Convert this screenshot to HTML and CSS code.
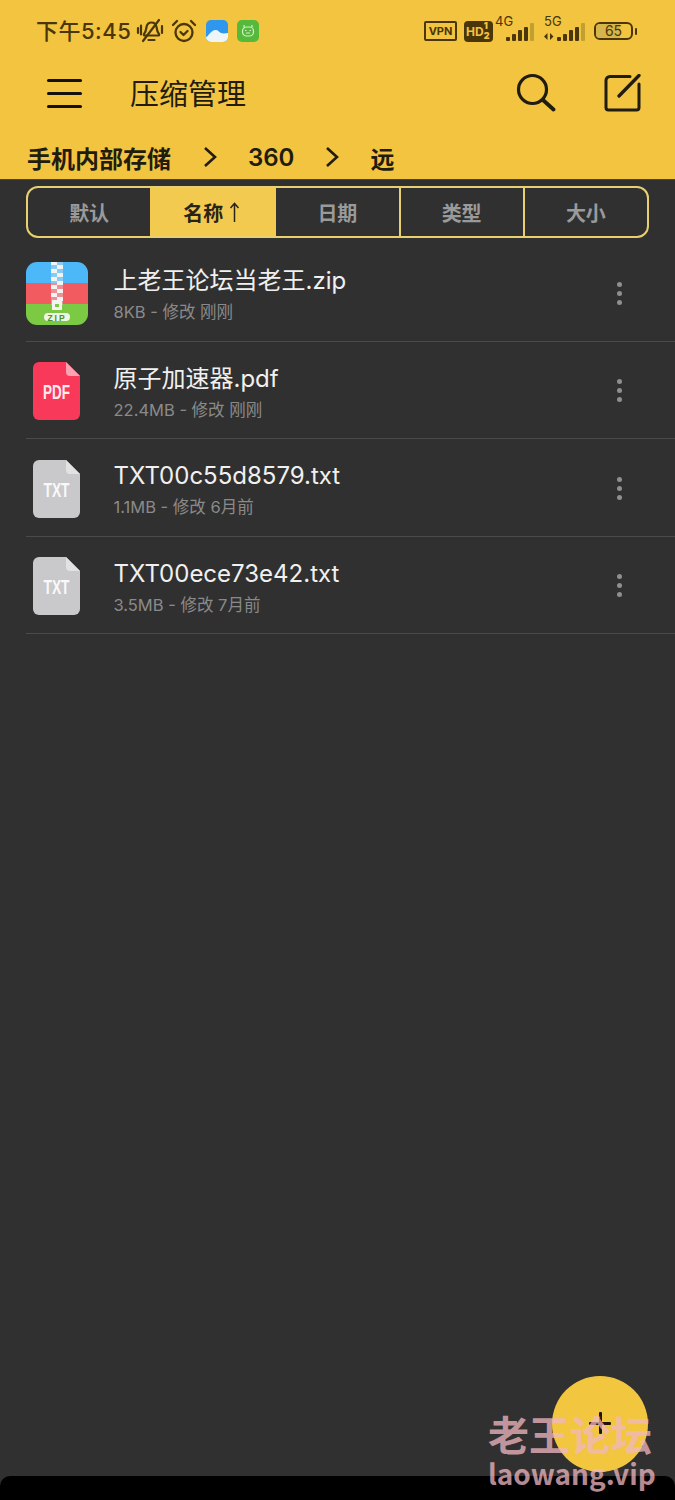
FILE: index.html
```html
<!DOCTYPE html>
<html lang="zh-CN">

<head>
    <meta charset="UTF-8">
    <meta name="viewport" content="width=device-width, initial-scale=1.0">
    <title>压缩管理</title>
    <link rel="stylesheet" href="styles.css">
</head>

<body>
    <div class="main">
        <div class="header">
            <div class="status">
                <div class="status-left">
                    <span class="time">下午5:45</span>
                    <svg class="ico-bell" width="30" height="28" viewBox="0 0 30 28" fill="none" stroke="#4a3608" stroke-width="2.2" stroke-linecap="round">
                        <path d="M8 17c2-2 2-4 2.500-7 .6-3 3-4.500 5-4.500 2.500 0 4.500 1.600 5 4.500.4 3 .8 5 2.500 7 .6.900 0 1.500-1 1.500H9c-1 0-1.500-.7-1-1.500z"/>
                        <path d="M12.500 23h6"/>
                        <path d="M7 24L23 3"/>
                        <path d="M2 11v5M5 8.500v9M26 9v7"/>
                    </svg>
                    <svg class="ico-alarm" width="26" height="26" viewBox="0 0 26 26" fill="none" stroke="#4a3608" stroke-width="2.300" stroke-linecap="round" stroke-linejoin="round">
                        <circle cx="13" cy="14.500" r="8.500"/>
                        <path d="M9.500 14l3 3 4-4"/>
                        <path d="M2 7l4-4M24 7l-4-4"/>
                    </svg>
                    <svg class="ico-app" width="22" height="22" viewBox="0 0 22 22">
                        <rect width="22" height="22" rx="5" fill="#2f97ee"/>
                        <path d="M0 17c3-1 4-6 9-7 3-.5 4 2 6 3 3 1 5 0 7 0v4a5 5 0 0 1-5 5H5a5 5 0 0 1-5-5z" fill="#eef5f6"/>
                    </svg>
                    <svg class="ico-app" width="22" height="22" viewBox="0 0 22 22" fill="none">
                        <rect width="22" height="22" rx="5" fill="#55b93b"/>
                        <rect x="5.500" y="7" width="11" height="9" rx="4" stroke="#d8f0c8" stroke-width="1.200"/>
                        <path d="M7 7V5M15 7V5M8 10.500h1.500M12.500 10.500H14M9 13h4" stroke="#d8f0c8" stroke-width="1.200"/>
                    </svg>
                </div>
                <div class="status-right">
                    <span class="vpn">VPN</span>
                    <span class="hd">HD<span class="hd-nums"><b>1</b><b>2</b></span></span>
                    <div class="signal">
                        <span class="net">4G</span>
                        <div class="bars">
                            <i class="b1"></i><i class="b2"></i><i class="b3"></i><i class="b4"></i><i class="b5"></i>
                        </div>
                    </div>
                    <div class="signal signal-five">
                        <span class="net">5G</span>
                        <div class="bars">
                            <svg class="arrows" width="10" height="9" viewBox="0 0 10 9" fill="#4a3608"><path d="M0 4.500L3.500 1v7zM6 1l3.500 3.500L6 8z"/></svg>
                            <i class="b1"></i><i class="b2"></i><i class="b3"></i><i class="b4"></i><i class="b5"></i>
                        </div>
                    </div>
                    <div class="battery"><span class="battery-fill"></span><span class="battery-num">65</span></div>
                    <span class="battery-tip"></span>
                </div>
            </div>

            <div class="toolbar">
                <div class="burger"><span></span><span></span><span></span></div>
                <h1 class="title">压缩管理</h1>
                <svg class="tool-search" width="40" height="40" viewBox="0 0 40 40" fill="none" stroke="#211c10" stroke-width="3.200" stroke-linecap="round">
                    <circle cx="16.500" cy="16.500" r="14"/>
                    <path d="M27 27l10.500 9.500" stroke-width="3.800"/>
                </svg>
                <svg class="tool-edit" width="38" height="38" viewBox="0 0 38 38" fill="none" stroke="#211c10" stroke-width="3" stroke-linecap="round" stroke-linejoin="round">
                    <path d="M26 2.500H6A4 4 0 0 0 2 6.500v27a2.500 2.500 0 0 0 2.500 2.500h28a2.500 2.500 0 0 0 2.500-2.500V10"/>
                    <path d="M15 22L35 1.500" stroke-width="3.300"/>
                </svg>
            </div>

            <div class="crumbs">
                <span class="crumb">手机内部存储</span>
                <svg class="sep" width="14" height="22" viewBox="0 0 14 22" fill="none" stroke="#221c10" stroke-width="2.600"><path d="M2 2l10 9-10 9"/></svg>
                <span class="crumb">360</span>
                <svg class="sep" width="14" height="22" viewBox="0 0 14 22" fill="none" stroke="#221c10" stroke-width="2.600"><path d="M2 2l10 9-10 9"/></svg>
                <span class="crumb">远</span>
            </div>
        </div>

        <div class="tabs">
            <div class="tab">默认</div>
            <div class="tab active">名称
                <svg class="up" width="11" height="20" viewBox="0 0 11 20" fill="none" stroke="#2a2416" stroke-width="1.500"><path d="M5.500 20V1.500M1.500 6l4-4.500 4 4.500"/></svg>
            </div>
            <div class="tab">日期</div>
            <div class="tab">类型</div>
            <div class="tab">大小</div>
        </div>

        <div class="list">
            <div class="row">
                <div class="file-ico">
                    <svg width="62" height="63" viewBox="0 0 62 63">
                        <defs><clipPath id="zipclip"><rect width="62" height="63" rx="11"/></clipPath></defs>
                        <g clip-path="url(#zipclip)">
                            <rect width="62" height="21" fill="#4db8f8"/>
                            <rect y="21" width="62" height="21" fill="#f25c60"/>
                            <rect y="42" width="62" height="21" fill="#7cc944"/>
                            <path d="M25 0h12v43H25z" fill="#eee" opacity=".35"/>
                            <path d="M25 0h6v3h-6zM31 3h6v4h-6zM25 7h6v4h-6zM31 11h6v4h-6zM25 15h6v4h-6zM31 19h6v4h-6zM25 23h6v4h-6zM31 27h6v4h-6zM25 31h6v4h-6zM31 35h6v4h-6z" fill="#f3f3f3"/>
                            <path d="M26 38h10v10H26z" fill="#f3f3f3"/>
                            <rect x="29" y="42" width="4" height="3" fill="#7cc944"/>
                            <rect x="18" y="51" width="26" height="8" rx="4" fill="#eef6e4"/>
                        </g>
                        <text x="31" y="58.500" class="zip-label">ZIP</text>
                    </svg>
                </div>
                <div class="info">
                    <div class="name">上老王论坛当老王.zip</div>
                    <div class="meta">8KB - 修改 刚刚</div>
                </div>
                <div class="more"><span></span><span></span><span></span></div>
            </div>

            <div class="row">
                <div class="file-ico">
                    <svg class="doc" width="47" height="58" viewBox="0 0 47 58">
                        <path d="M6 0h27l14 14v38a6 6 0 0 1-6 6H6a6 6 0 0 1-6-6V6a6 6 0 0 1 6-6z" fill="#f8395a"/>
                        <path d="M33 0l14 14H37a4 4 0 0 1-4-4z" fill="#fba3b2"/>
                        <text class="doc-label" transform="translate(23.500 36.500) scale(.675 1)">PDF</text>
                    </svg>
                </div>
                <div class="info">
                    <div class="name">原子加速器.pdf</div>
                    <div class="meta">22.4MB - 修改 刚刚</div>
                </div>
                <div class="more"><span></span><span></span><span></span></div>
            </div>

            <div class="row">
                <div class="file-ico">
                    <svg class="doc" width="47" height="58" viewBox="0 0 47 58">
                        <path d="M6 0h27l14 14v38a6 6 0 0 1-6 6H6a6 6 0 0 1-6-6V6a6 6 0 0 1 6-6z" fill="#c9c9cb"/>
                        <path d="M33 0l14 14H37a4 4 0 0 1-4-4z" fill="#e2e2e3"/>
                        <text class="doc-label" transform="translate(23.500 36.500) scale(.69 1)">TXT</text>
                    </svg>
                </div>
                <div class="info">
                    <div class="name">TXT00c55d8579.txt</div>
                    <div class="meta">1.1MB - 修改 6月前</div>
                </div>
                <div class="more"><span></span><span></span><span></span></div>
            </div>

            <div class="row">
                <div class="file-ico">
                    <svg class="doc" width="47" height="58" viewBox="0 0 47 58">
                        <path d="M6 0h27l14 14v38a6 6 0 0 1-6 6H6a6 6 0 0 1-6-6V6a6 6 0 0 1 6-6z" fill="#c9c9cb"/>
                        <path d="M33 0l14 14H37a4 4 0 0 1-4-4z" fill="#e2e2e3"/>
                        <text class="doc-label" transform="translate(23.500 36.500) scale(.69 1)">TXT</text>
                    </svg>
                </div>
                <div class="info">
                    <div class="name">TXT00ece73e42.txt</div>
                    <div class="meta">3.5MB - 修改 7月前</div>
                </div>
                <div class="more"><span></span><span></span><span></span></div>
            </div>
        </div>

        <div class="bottom"></div>

        <div class="fab"><span class="fab-h"></span><span class="fab-v"></span></div>
        <div class="mark">
            <div class="mark-cn">老王论坛</div>
            <div class="mark-en">laowang.vip</div>
        </div>
    </div>
</body>

</html>
```

FILE: styles.css
```css
* {
    margin: 0;
    padding: 0;
    box-sizing: border-box;
}

body {
    background-color: #303030;
    font-family: Inter, "Noto Sans CJK SC", sans-serif;
}

.main {
    position: relative;
    width: 100%;
    height: 100vh;
    display: flex;
    flex-direction: column;
    overflow: hidden;
}

/* yellow header */
.header {
    height: 180px;
    flex-shrink: 0;
    background-color: #f2c440;
    border-bottom: 1px solid #4b4430;
    color: #221c10;
}

.status {
    height: 62px;
    padding: 0 38px 0 36px;
    display: flex;
    justify-content: space-between;
    align-items: center;
}

.status-left {
    display: flex;
    align-items: center;
}

.time {
    margin-top: -5px;
    font-size: 22px;
    color: #4a3608;
    font-weight: 500;
    letter-spacing: .5px;
}

.ico-bell {
    margin-left: 5px;
}

.ico-alarm {
    margin-left: 5px;
}

.ico-app {
    margin-left: 9px;
}

.status-right {
    display: flex;
    align-items: center;
    color: #4a3608;
}

.vpn {
    width: 33px;
    height: 20px;
    border: 2px solid #4a3608;
    border-radius: 2px;
    font-size: 11px;
    font-weight: 700;
    line-height: 16px;
    text-align: center;
}

.hd {
    width: 29px;
    height: 21px;
    margin-left: 7px;
    padding-left: 2px;
    background-color: #4a3608;
    border-radius: 4px;
    color: #f2c440;
    font-size: 12px;
    font-weight: 700;
    line-height: 21px;
    display: flex;
}

.hd-nums {
    display: flex;
    flex-direction: column;
    font-size: 9px;
    line-height: 10px;
}

.hd-nums b {
    display: block;
}

.signal {
    position: relative;
    width: 36px;
    height: 24px;
    margin-left: 5px;
}

.signal-five {
    width: 42px;
    margin-left: 9px;
}

.net {
    position: absolute;
    left: -3px;
    top: -5px;
    font-size: 13px;
    line-height: 14px;
}

.signal-five .net {
    left: 1px;
}

.bars {
    position: absolute;
    right: 0;
    bottom: 2px;
    display: flex;
    align-items: flex-end;
    gap: 2px;
}

.bars i {
    display: block;
    width: 4px;
    background-color: #4a3608;
    border-radius: 1px;
}

.bars .b1 {
    height: 4px;
}

.bars .b2 {
    height: 7px;
}

.bars .b3 {
    height: 11px;
}

.bars .b4 {
    height: 14px;
}

.bars .b5 {
    height: 18px;
    background-color: #c0a030;
}

.arrows {
    margin-right: 1px;
}

.battery {
    position: relative;
    width: 39px;
    height: 18px;
    margin-left: 9px;
    border: 2px solid #4a3608;
    border-radius: 6px;
    overflow: hidden;
}

.battery-fill {
    position: absolute;
    left: 0;
    top: 0;
    bottom: 0;
    width: 24px;
    background-color: #d6b54a;
}

.battery-num {
    position: relative;
    display: block;
    font-size: 14px;
    line-height: 14px;
    text-align: center;
}

.battery-tip {
    width: 2px;
    height: 7px;
    margin-left: 2px;
    background-color: #4a3608;
    border-radius: 1px;
}

.toolbar {
    height: 62px;
    padding-left: 47px;
    display: flex;
    align-items: center;
}

.burger {
    width: 35px;
    display: flex;
    flex-direction: column;
    gap: 10px;
}

.burger span {
    display: block;
    height: 3px;
    background-color: #14100a;
    border-radius: 2px;
}

.title {
    flex: 1;
    margin-left: 48px;
    margin-top: -2px;
    font-size: 29px;
    font-weight: 400;
}

.tool-search {
    margin-right: 48px;
}

.tool-edit {
    margin-right: 33px;
}

.crumbs {
    height: 54px;
    padding: 12px 0 0 27px;
    display: flex;
    align-items: center;
    font-size: 24px;
    font-weight: 600;
}

.sep {
    margin: 0 31px 0 32px;
}

.sep:nth-of-type(2) {
    margin-left: 31px;
}

/* sort tabs */
.tabs {
    height: 52px;
    margin: 6px 26px 0;
    flex-shrink: 0;
    display: flex;
    border: 2px solid #e8d070;
    border-radius: 12px;
    overflow: hidden;
}

.tab {
    flex: 1;
    display: flex;
    justify-content: center;
    align-items: center;
    gap: 6px;
    color: #9a9a9a;
    font-size: 20px;
    font-weight: 700;
    border-left: 2px solid #e8d070;
}

.tab:first-child {
    border-left: 0;
}

.tab.active {
    flex: 0 0 126px;
    padding-right: 3px;
    background-color: #f2ca50;
    color: #2a2416;
    border-left: 0;
}

.tab.active + .tab {
    border-left: 0;
}

/* file list */
.list {
    flex: 1;
    margin-top: 6px;
    padding-left: 26px;
}

.row {
    height: 97.500px;
    display: flex;
    align-items: center;
    border-bottom: 1px solid #4a4a4a;
}

.file-ico {
    width: 87.500px;
    margin-top: 3px;
    display: flex;
}

.doc {
    margin-left: 7px;
}

.zip-label {
    fill: #4d8f2a;
    font-family: "Liberation Sans", sans-serif;
    font-size: 8.500px;
    font-weight: 700;
    letter-spacing: 2px;
    text-anchor: middle;
}

.doc-label {
    fill: #fff;
    opacity: .9;
    font-family: "Liberation Sans", sans-serif;
    font-size: 20px;
    font-weight: 700;
    text-anchor: middle;
}

.info {
    flex: 1;
    margin-top: 5px;
}

.name {
    color: #f0f0f0;
    font-size: 24px;
    line-height: 32px;
}

.meta {
    margin-top: 3px;
    color: #8a8a8a;
    font-size: 16.500px;
    line-height: 24px;
}

.more {
    width: 5px;
    margin-top: 2px;
    margin-right: 53px;
    display: flex;
    flex-direction: column;
    gap: 4px;
}

.more span {
    display: block;
    width: 5px;
    height: 5px;
    border-radius: 50%;
    background-color: #8f8f8f;
}

.bottom {
    height: 24px;
    flex-shrink: 0;
    background-color: #000;
    border-radius: 10px 10px 0 0;
}

/* floating button and watermark */
.fab {
    position: absolute;
    left: 552px;
    top: 1376px;
    width: 96px;
    height: 96px;
    border-radius: 50%;
    background-color: #f3c63f;
}

.fab-h,
.fab-v {
    position: absolute;
    background-color: #1c1608;
    border-radius: 1px;
}

.fab-h {
    left: 37px;
    top: 46px;
    width: 22px;
    height: 3px;
}

.fab-v {
    left: 47px;
    top: 36px;
    width: 3px;
    height: 22px;
}

.mark {
    position: absolute;
    left: 488px;
    top: 1408px;
    width: 170px;
    color: #f0b8c0;
    opacity: .75;
    font-weight: 700;
    font-family: "Noto Sans CJK SC", sans-serif;
}

.mark-cn {
    font-size: 41px;
    line-height: 50px;
}

.mark-en {
    font-size: 28px;
    line-height: 30px;
}
```
